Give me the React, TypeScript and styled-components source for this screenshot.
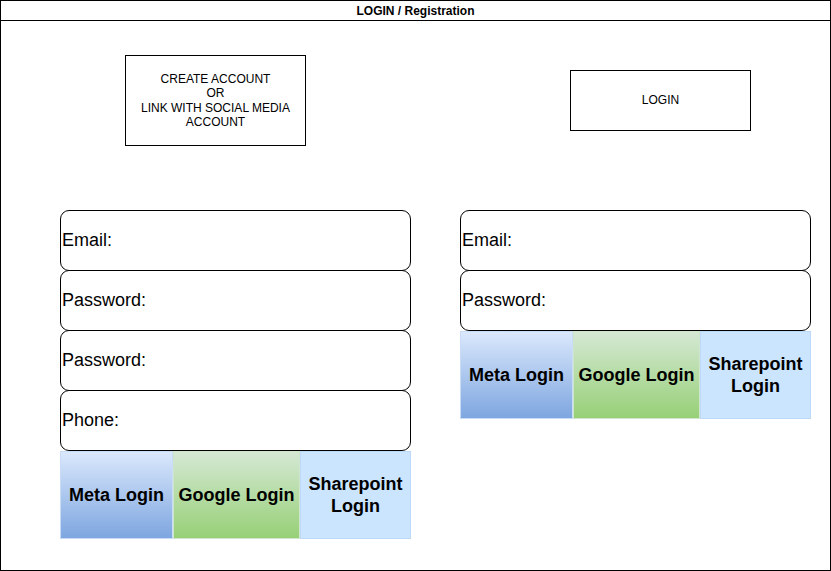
import styled, { createGlobalStyle } from "styled-components";

const GlobalStyle = createGlobalStyle`
  html, body {
    margin: 0;
    padding: 0;
    background: #ffffff;
  }
  body {
    font-family: "Liberation Sans", Arial, sans-serif;
    color: #000000;
  }
`;

const Frame = styled.div`
  width: 831px;
  height: 571px;
  box-sizing: border-box;
  border: 1px solid #000000;
  display: flex;
  flex-direction: column;
`;

const Header = styled.header`
  height: 19px;
  border-bottom: 1px solid #000000;
  display: flex;
  align-items: center;
  justify-content: center;
  font-size: 12px;
  font-weight: bold;
`;

const Body = styled.main`
  flex: 1;
  display: grid;
  grid-template-columns: 430px 1fr;
`;

const Column = styled.section<{ $formLeft: number }>`
  display: flex;
  flex-direction: column;
  padding-left: ${(p) => p.$formLeft}px;
`;

const TopArea = styled.div`
  height: 189px;
`;

const InfoBox = styled.div<{ $offsetX: number; $offsetY: number; $height: number }>`
  margin-left: ${(p) => p.$offsetX}px;
  margin-top: ${(p) => p.$offsetY}px;
  width: 181px;
  height: ${(p) => p.$height}px;
  box-sizing: border-box;
  border: 1px solid #000000;
  display: flex;
  align-items: center;
  justify-content: center;
  text-align: center;
  font-size: 12px;
  line-height: 14.5px;
`;

const Form = styled.div`
  width: 351px;
  display: flex;
  flex-direction: column;
`;

const Field = styled.div`
  height: 61px;
  box-sizing: border-box;
  border: 1px solid #000000;
  border-radius: 9px;
  background: #ffffff;
  display: flex;
  align-items: center;
  padding-left: 1px;
  font-size: 18px;
  & + & {
    margin-top: -1px;
  }
`;

const SocialRow = styled.div`
  display: flex;
  height: 88px;
`;

type Provider = "meta" | "google" | "sharepoint";

const providerStyles: Record<Provider, { bg: string; border: string; width: number }> = {
  meta: {
    bg: "linear-gradient(180deg, #dae8fc 0%, #7ea6e0 100%)",
    border: "#c9dcf5",
    width: 113,
  },
  google: {
    bg: "linear-gradient(180deg, #d5e8d4 0%, #97d077 100%)",
    border: "#d0e6cc",
    width: 127,
  },
  sharepoint: {
    bg: "#cce5ff",
    border: "#bcd9f7",
    width: 111,
  },
};

const SocialButton = styled.div<{ $provider: Provider }>`
  width: ${(p) => providerStyles[p.$provider].width}px;
  box-sizing: border-box;
  background: ${(p) => providerStyles[p.$provider].bg};
  border: 1px solid ${(p) => providerStyles[p.$provider].border};
  display: flex;
  align-items: center;
  justify-content: center;
  text-align: center;
  font-size: 18px;
  font-weight: bold;
  line-height: 22px;
`;

const Socials = () => (
  <SocialRow>
    <SocialButton $provider="meta">Meta Login</SocialButton>
    <SocialButton $provider="google">Google Login</SocialButton>
    <SocialButton $provider="sharepoint">
      Sharepoint
      <br />
      Login
    </SocialButton>
  </SocialRow>
);

export default function App() {
  return (
    <>
      <GlobalStyle />
      <Frame>
        <Header>LOGIN / Registration</Header>
        <Body>
          <Column $formLeft={59}>
            <TopArea>
              <InfoBox $offsetX={65} $offsetY={34} $height={91}>
                CREATE ACCOUNT
                <br />
                OR
                <br />
                LINK WITH SOCIAL MEDIA
                <br />
                ACCOUNT
              </InfoBox>
            </TopArea>
            <Form>
              <Field>Email:</Field>
              <Field>Password:</Field>
              <Field>Password:</Field>
              <Field>Phone:</Field>
              <Socials />
            </Form>
          </Column>
          <Column $formLeft={29}>
            <TopArea>
              <InfoBox $offsetX={110} $offsetY={49} $height={61}>
                LOGIN
              </InfoBox>
            </TopArea>
            <Form>
              <Field>Email:</Field>
              <Field>Password:</Field>
              <Socials />
            </Form>
          </Column>
        </Body>
      </Frame>
    </>
  );
}
